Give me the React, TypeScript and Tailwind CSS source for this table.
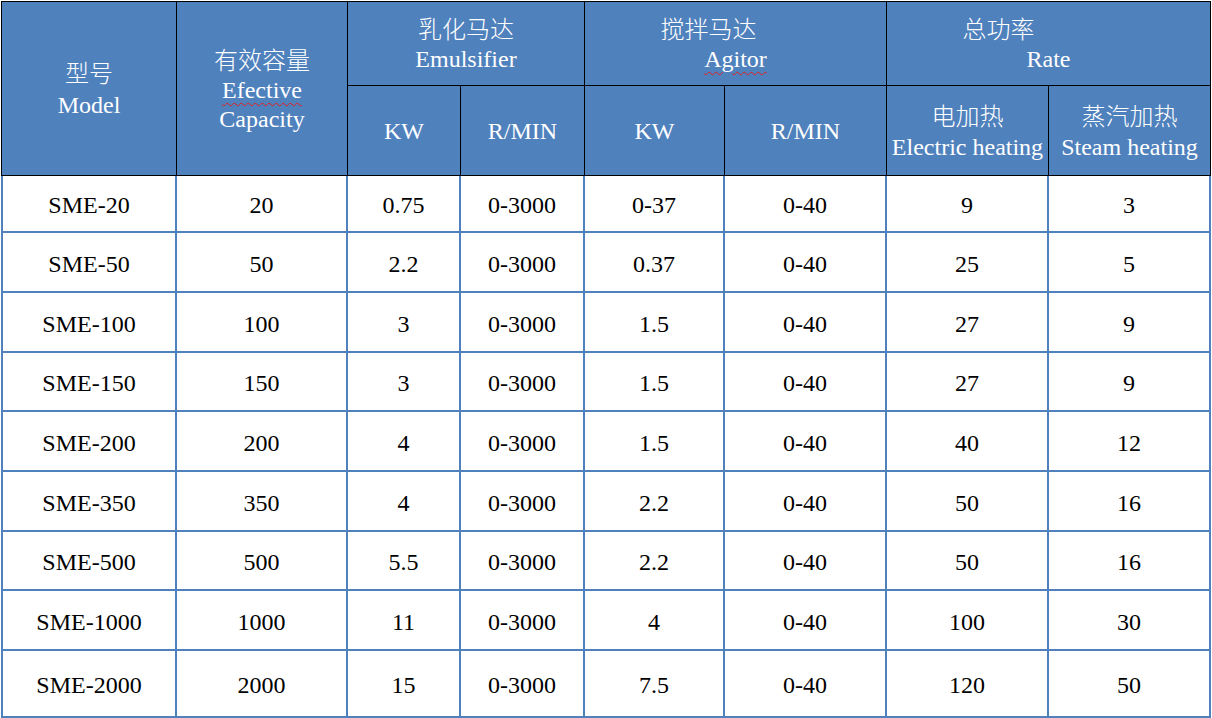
const rows = [
  ['SME-20', '20', '0.75', '0-3000', '0-37', '0-40', '9', '3'],
  ['SME-50', '50', '2.2', '0-3000', '0.37', '0-40', '25', '5'],
  ['SME-100', '100', '3', '0-3000', '1.5', '0-40', '27', '9'],
  ['SME-150', '150', '3', '0-3000', '1.5', '0-40', '27', '9'],
  ['SME-200', '200', '4', '0-3000', '1.5', '0-40', '40', '12'],
  ['SME-350', '350', '4', '0-3000', '2.2', '0-40', '50', '16'],
  ['SME-500', '500', '5.5', '0-3000', '2.2', '0-40', '50', '16'],
  ['SME-1000', '1000', '11', '0-3000', '4', '0-40', '100', '30'],
  ['SME-2000', '2000', '15', '0-3000', '7.5', '0-40', '120', '50'],
];

const font = "font-[family-name:'Liberation_Serif','Noto_Sans_CJK_SC',serif]";
const spell = 'underline decoration-wavy decoration-[#e02020] decoration-1 underline-offset-[4px]';
const cjk = 'font-light';

function HeadCell({ className = '', children }: { className?: string; children: React.ReactNode }) {
  return (
    <div className={`bg-[#4f81bd] text-white flex flex-col items-center justify-center text-center ${className}`}>
      {children}
    </div>
  );
}

export default function App() {
  return (
    <div className={`w-[1212px] h-[718px] bg-white pl-px pt-px ${font} text-[24px] leading-[30px]`}>
      {/* header */}
      <div className="w-[1210px] grid grid-cols-[174px_170px_112px_123px_139px_161px_161px_161px] grid-rows-[83px_89px] gap-px bg-black p-px">
        <HeadCell className="row-span-2 pt-[2px] leading-[31px]">
          <span className={cjk}>型号</span>
          <span>Model</span>
        </HeadCell>
        <HeadCell className="row-span-2 pt-[4px] leading-[29px]">
          <span className={cjk}>有效容量</span>
          <span className={spell}>Efective</span>
          <span>Capacity</span>
        </HeadCell>
        <HeadCell className="col-span-2 pt-[3px] leading-[29px]">
          <span className={cjk}>乳化马达</span>
          <span>Emulsifier</span>
        </HeadCell>
        <HeadCell className="col-span-2 pt-[3px] leading-[29px]">
          <span className={`${cjk} pr-[54px]`}>搅拌马达</span>
          <span className={spell}>Agitor</span>
        </HeadCell>
        <HeadCell className="col-span-2 pt-[3px] leading-[29px]">
          <span className={`${cjk} pr-[100px]`}>总功率</span>
          <span>Rate</span>
        </HeadCell>
        <HeadCell>KW</HeadCell>
        <HeadCell>R/MIN</HeadCell>
        <HeadCell>KW</HeadCell>
        <HeadCell>R/MIN</HeadCell>
        <HeadCell className="pt-[2px]">
          <span className={cjk}>电加热</span>
          <span className="whitespace-nowrap">Electric heating</span>
        </HeadCell>
        <HeadCell className="pt-[2px]">
          <span className={cjk}>蒸汽加热</span>
          <span className="whitespace-nowrap">Steam heating</span>
        </HeadCell>
      </div>

      {/* body */}
      <div className="w-[1210px] grid grid-cols-[172px_169px_111px_122px_138px_160px_160px_160px] grid-rows-[55px_58px_58px_57px_58px_58px_57px_58px_65px] gap-[2px] bg-[#4f81bd] px-[2px] pb-[2px]">
        {rows.map((r) =>
          r.map((v, i) => (
            <div key={r[0] + i} className="bg-white text-black flex items-center justify-center pt-[3px]">
              {v}
            </div>
          ))
        )}
      </div>
    </div>
  );
}
